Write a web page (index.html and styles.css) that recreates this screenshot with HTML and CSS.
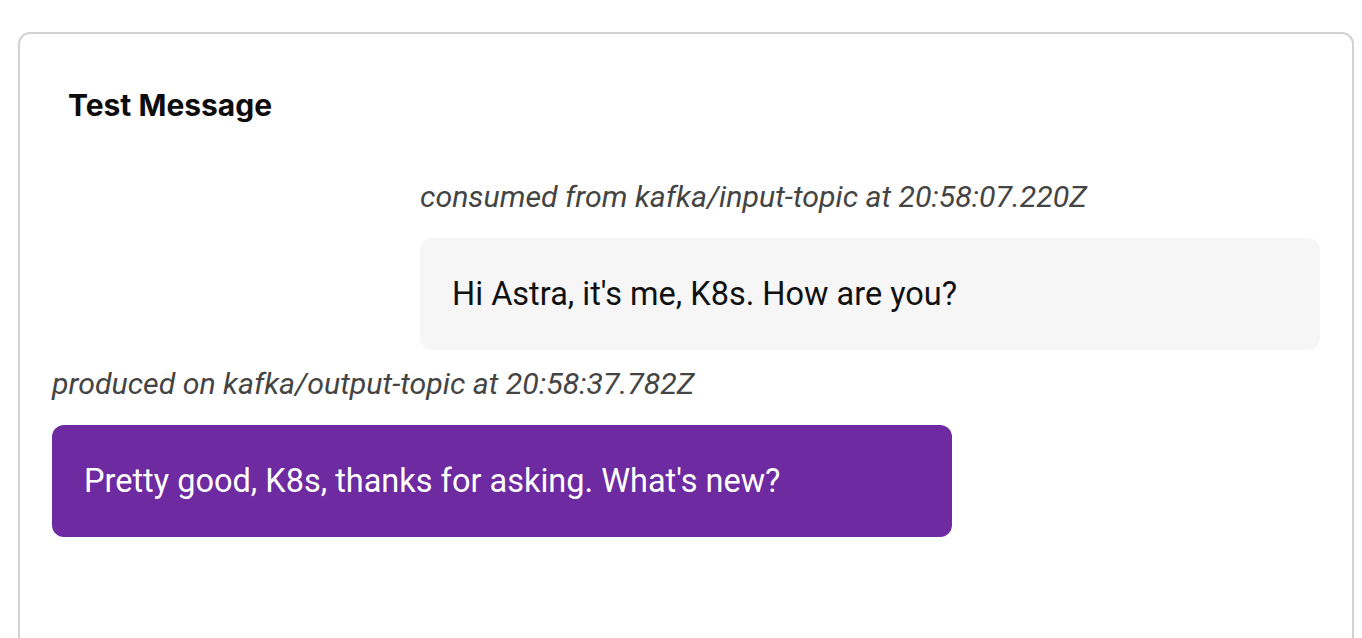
FILE: index.html
```html
<!DOCTYPE html>
<html>
<head>
<meta charset="utf-8">
<link rel="stylesheet" href="styles.css">
</head>
<body>
<div class="card">
  <h2 class="title">Test Message</h2>
  <div class="thread">
    <div class="msg msg-in">
      <div class="meta">consumed from kafka/input-topic at 20:58:07.220Z</div>
      <div class="bubble bubble-in">Hi Astra, it's me, K8s. How are you?</div>
    </div>
    <div class="msg msg-out">
      <div class="meta">produced on kafka/output-topic at 20:58:37.782Z</div>
      <div class="bubble bubble-out">Pretty good, K8s, thanks for asking. What's new?</div>
    </div>
  </div>
</div>
</body>
</html>
```

FILE: styles.css
```css
html, body {
  margin: 0;
  padding: 0;
  background: #ffffff;
  overflow: hidden;
}
body {
  padding: 32px 8px 0 18px;
  font-family: Roboto, "Liberation Sans", sans-serif;
  color: #111;
}
.card {
  border: 2px solid #d2d2d2;
  border-radius: 12px;
  padding: 32px 32px 120px 32px;
  min-height: 700px;
  box-sizing: border-box;
}
.title {
  margin: 21px 0 0 16px;
  font-family: Inter, "Noto Sans", sans-serif;
  font-weight: 700;
  font-size: 30px;
  line-height: 36px;
  color: #0d0d0d;
}
.thread {
  display: flex;
  flex-direction: column;
  margin-top: 56px;
  gap: 16px;
}
.msg {
  display: flex;
  flex-direction: column;
  width: 900px;
}
.msg-in { align-self: flex-end; }
.msg-out { align-self: flex-start; }
.meta {
  font-style: italic;
  font-size: 30.3px;
  line-height: 36px;
  color: #444;
  margin-bottom: 23px;
  white-space: nowrap;
}
.bubble {
  border-radius: 12px;
  padding: 32px;
  font-size: 32.5px;
  line-height: 48px;
  box-sizing: border-box;
}
.bubble-in {
  background: #f6f6f6;
  color: #111;
}
.bubble-out {
  background: #6d2aa1;
  color: #ffffff;
}
```
